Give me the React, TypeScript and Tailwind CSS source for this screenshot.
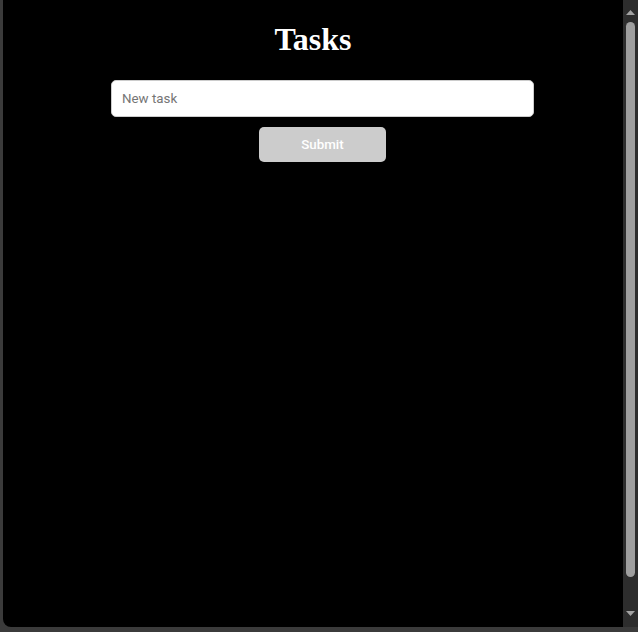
import { useState } from "react";

const ScrollBar = () => (
  <div className="w-[15px] h-full bg-[#2d2d2d] flex flex-col items-center">
    <div className="h-[22px] flex items-center justify-center pt-[2px]">
      <svg width="9" height="5" viewBox="0 0 9 5">
        <polygon points="4.5,0 9,5 0,5" fill="#a3a3a3" />
      </svg>
    </div>
    <div className="w-[9px] h-[555px] bg-[#9f9f9f] rounded-full" />
    <div className="flex-1 flex items-end justify-center pb-[11px]">
      <svg width="9" height="5" viewBox="0 0 9 5">
        <polygon points="0,0 9,0 4.5,5" fill="#a3a3a3" />
      </svg>
    </div>
  </div>
);

const App = () => {
  const [task, setTask] = useState("");

  return (
    <div className="w-[638px] h-[632px] bg-[#3b3b3b] pl-[3px] pb-[5px]">
      <div className="h-full flex bg-black rounded-bl-[8px] overflow-hidden">
        <div className="flex-1 flex flex-col items-center pt-[20px] font-['Roboto','Liberation_Sans',Arial,sans-serif]">
          <h1 className="text-[32px] leading-[38px] font-bold text-white font-['Liberation_Serif','Times_New_Roman',serif]">
            Tasks
          </h1>
          <div className="w-[404px] mt-[22px]">
            <form
              className="w-[423px] flex flex-col items-center gap-[10px]"
              onSubmit={(e) => {
                e.preventDefault();
                setTask("");
              }}
            >
              <input
                type="text"
                value={task}
                onChange={(e) => setTask(e.target.value)}
                placeholder="New task"
                className="w-full h-[37px] px-[10px] bg-white text-[13.333px] text-black placeholder:text-[#757575] border border-[#cccccc] rounded-[5px] outline-none"
              />
              <button
                type="submit"
                className="w-[127px] h-[35px] bg-[#cccccc] text-white text-[13.333px] font-medium rounded-[5px]"
              >
                Submit
              </button>
            </form>
          </div>
        </div>
        <ScrollBar />
      </div>
    </div>
  );
};

export default App;
